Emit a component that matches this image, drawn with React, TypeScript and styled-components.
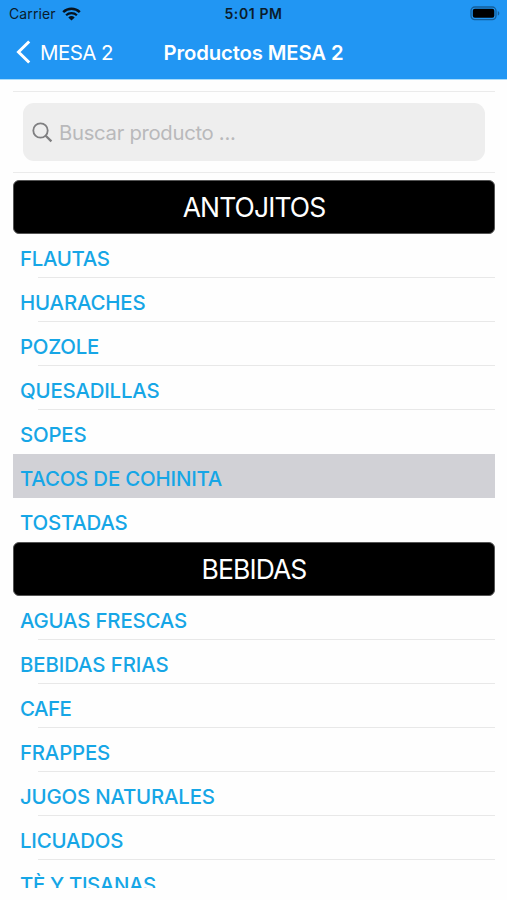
import React from "react";
import styled, { createGlobalStyle } from "styled-components";

const GlobalStyle = createGlobalStyle`
  * { box-sizing: border-box; }
  body { margin: 0; background: #fefefe; font-family: Inter, "Liberation Sans", sans-serif; }
`;

const Screen = styled.div`
  width: 507px;
  height: 900px;
  display: flex;
  flex-direction: column;
  overflow: hidden;
  background: #fefefe;
`;

const Header = styled.header`
  flex: none;
  height: 79px;
  background: #2196f3;
  box-shadow: 0 1px 0 #a9dcfb;
`;

const StatusBar = styled.div`
  height: 27px;
  padding: 0 6px 0 9px;
  display: grid;
  grid-template-columns: 1fr auto 1fr;
  align-items: center;
  color: #0a1c2c;
`;

const Carrier = styled.div`
  display: flex;
  align-items: center;
  gap: 6px;
  font-size: 14px;
  letter-spacing: 0.1px;
`;

const Clock = styled.div`
  margin-right: 3px;
  font-size: 14px;
  font-weight: 600;
  letter-spacing: 0.6px;
`;

const BatterySlot = styled.div`
  display: flex;
  justify-content: flex-end;
`;

const NavBar = styled.nav`
  height: 50px;
  padding: 0 15px;
  display: grid;
  grid-template-columns: 1fr auto 1fr;
  align-items: center;
  color: #fff;
`;

const BackButton = styled.button`
  display: flex;
  align-items: center;
  gap: 9px;
  padding: 0;
  border: 0;
  background: none;
  color: inherit;
  font: 400 20.5px Inter, "Liberation Sans", sans-serif;
  letter-spacing: -0.6px;
`;

const Title = styled.h1`
  margin: 0;
  font-size: 20.3px;
  font-weight: 600;
  letter-spacing: -0.12px;
`;

const Content = styled.main`
  flex: none;
  height: 809px;
  padding: 12px 12px 0 13px;
  overflow: hidden;
`;

const SearchSection = styled.section`
  height: 82px;
  padding: 11px 10px 0;
  border-top: 1px solid #ebebeb;
  border-bottom: 1px solid #ebebeb;
`;

const SearchField = styled.label`
  height: 58px;
  padding-left: 9px;
  display: flex;
  align-items: center;
  gap: 6px;
  border-radius: 11px;
  background: #eee;
`;

const SearchInput = styled.input`
  flex: 1;
  min-width: 0;
  padding: 0;
  border: 0;
  outline: 0;
  background: none;
  font: 400 20.3px Inter, "Liberation Sans", sans-serif;
  letter-spacing: -0.3px;
  &::placeholder { color: #b9b9bb; opacity: 1; }
`;

const Groups = styled.div`
  padding-top: 7px;
`;

const GroupTitle = styled.h2`
  height: 54px;
  margin: 0;
  display: flex;
  align-items: center;
  justify-content: center;
  border: 1px solid #555;
  border-radius: 6px;
  background: #000;
  color: #fff;
  font-size: 26.5px;
  font-weight: 400;
  letter-spacing: -0.9px;
`;

const List = styled.ul`
  margin: 0;
  padding: 0;
  list-style: none;
`;

const Row = styled.li<{ $selected?: boolean; $line?: boolean }>`
  height: 44px;
  padding: 5px 0 0 7px;
  display: flex;
  align-items: center;
  color: #16a6e6;
  font-size: 20.4px;
  font-weight: 550;
  white-space: nowrap;
  background: ${(p) =>
    p.$selected
      ? "#d1d1d6"
      : p.$line
        ? "linear-gradient(#e8e8e8, #e8e8e8) 25px 100% / 100% 1px no-repeat"
        : "none"};
`;

const Name = styled.span<{ $tracking: number }>`
  letter-spacing: ${(p) => p.$tracking}px;
`;

type Product = { name: string; tracking?: number };

const groups: { title: string; items: Product[] }[] = [
  {
    title: "ANTOJITOS",
    items: [
      { name: "FLAUTAS", tracking: -0.3 },
      { name: "HUARACHES", tracking: -0.15 },
      { name: "POZOLE", tracking: -0.25 },
      { name: "QUESADILLAS" },
      { name: "SOPES" },
      { name: "TACOS DE COHINITA" },
      { name: "TOSTADAS" },
    ],
  },
  {
    title: "BEBIDAS",
    items: [
      { name: "AGUAS FRESCAS" },
      { name: "BEBIDAS FRIAS", tracking: -0.1 },
      { name: "CAFE", tracking: -0.5 },
      { name: "FRAPPES" },
      { name: "JUGOS NATURALES" },
      { name: "LICUADOS" },
      { name: "TÈ Y TISANAS", tracking: -0.35 },
    ],
  },
];

const selected = "TACOS DE COHINITA";

const WifiIcon = () => (
  <svg width="19" height="14" viewBox="0 0 19 14" fill="none" stroke="#07131e">
    <path d="M1.2 5.1a12 12 0 0 1 16.6 0" strokeWidth="2.5" />
    <path d="M4.1 8.3a7.8 7.8 0 0 1 10.8 0" strokeWidth="2.2" />
    <path d="M9.5 13.6 6.3 10.4a4.7 4.7 0 0 1 6.4 0z" fill="#07131e" stroke="none" />
  </svg>
);

const BatteryIcon = () => (
  <svg width="31" height="15" viewBox="0 0 31 15">
    <rect x="1" y="1" width="25" height="12.6" rx="3.8" fill="none" stroke="#155f9a" strokeWidth="1.3" />
    <rect x="2.8" y="2.8" width="21.5" height="9" rx="2" fill="#000" />
    <path d="M27.8 5v4.6c2-.8 2-3.8 0-4.6z" fill="#155f9a" />
  </svg>
);

const BackIcon = () => (
  <svg width="16" height="24" viewBox="0 0 16 24" fill="none" stroke="#fff" strokeWidth="3">
    <path d="M14.2 1.5 3.5 12l10.7 10.5" />
  </svg>
);

const SearchIcon = () => (
  <svg width="21" height="21" viewBox="0 0 21 21" fill="none" stroke="#7f7f81" strokeWidth="1.8">
    <circle cx="8.5" cy="8.5" r="7.2" />
    <path d="M13.7 13.7l5.7 5.7" strokeWidth="2.3" />
  </svg>
);

export default function App() {
  return (
    <Screen>
      <GlobalStyle />
      <Header>
        <StatusBar>
          <Carrier>
            Carrier
            <WifiIcon />
          </Carrier>
          <Clock>5:01 PM</Clock>
          <BatterySlot>
            <BatteryIcon />
          </BatterySlot>
        </StatusBar>
        <NavBar>
          <BackButton>
            <BackIcon />
            MESA 2
          </BackButton>
          <Title>Productos MESA 2</Title>
        </NavBar>
      </Header>
      <Content>
        <SearchSection>
          <SearchField>
            <SearchIcon />
            <SearchInput placeholder="Buscar producto ..." />
          </SearchField>
        </SearchSection>
        <Groups>
          {groups.map((group) => (
            <section key={group.title}>
              <GroupTitle>{group.title}</GroupTitle>
              <List>
                {group.items.map((item, i) => (
                  <Row
                    key={item.name}
                    $selected={item.name === selected}
                    $line={i < group.items.length - 1 && group.items[i + 1].name !== selected}
                  >
                    <Name $tracking={item.tracking ?? -0.18}>{item.name}</Name>
                  </Row>
                ))}
              </List>
            </section>
          ))}
        </Groups>
      </Content>
    </Screen>
  );
}
